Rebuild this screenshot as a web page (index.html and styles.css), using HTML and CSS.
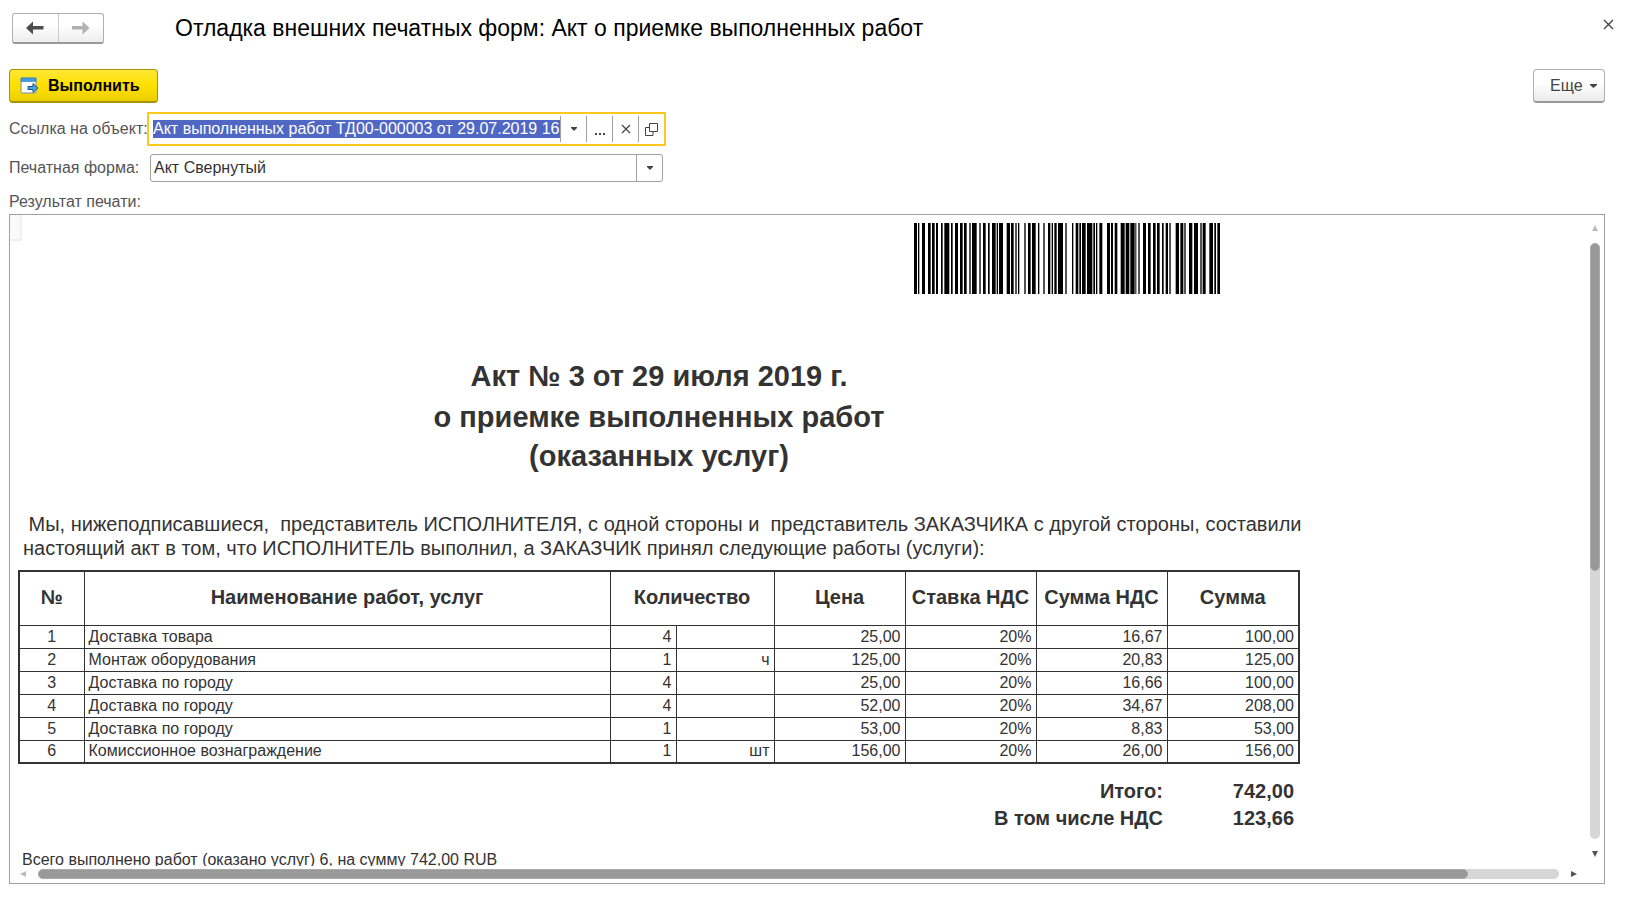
FILE: index.html
```html
<!DOCTYPE html>
<html lang="ru">
<head>
<meta charset="utf-8">
<title>Отладка внешних печатных форм</title>
<link rel="stylesheet" href="styles.css">
</head>
<body>
<header class="titlebar">
  <div class="nav">
    <button class="nav-btn" type="button" aria-label="Назад"><svg width="18" height="14" viewBox="0 0 18 14"><path d="M0 7 7 .5V5H17.500V8.500H7V13.500z" fill="#4d4d4d"/></svg></button>
    <button class="nav-btn" type="button" aria-label="Вперед"><svg width="18" height="14" viewBox="0 0 18 14"><path d="M17.500 7 10.500 .5V5H0V8.500H10.500V13.500z" fill="#b0b0b0"/></svg></button>
  </div>
  <h1 class="title">Отладка внешних печатных форм: Акт о приемке выполненных работ</h1>
  <button class="close" type="button" aria-label="Закрыть"><svg width="11" height="11" viewBox="0 0 11 11"><path d="M1 1 10 10M10 1 1 10" stroke="#444" stroke-width="1.400"/></svg></button>
</header>

<div class="toolbar">
  <button class="run" type="button">
    <svg width="20" height="18" viewBox="0 0 20 18"><rect x="1" y="1" width="15" height="15" rx="1" fill="#fff" stroke="#7b8ea5"/><path d="M1 1h15v3.500H1z" fill="#3f9be0" stroke="#2f7cc0" stroke-width=".6"/><path d="M8 9.500h5V6.500l5 4.500-5 4.500v-3H8z" fill="#4aa9e0" stroke="#1c5581"/></svg>
    Выполнить
  </button>
  <button class="more" type="button">Еще <svg width="7" height="4" viewBox="0 0 7 4"><path d="M0 0h7v1L3.500 4 0 1z" fill="#444"/></svg></button>
</div>

<div class="form">
  <label class="label" for="object">Ссылка на объект:</label>
  <div class="field focused">
    <input class="object" id="object" type="text" value="Акт выполненных работ ТД00-000003 от 29.07.2019 16">
    <button class="tool" type="button" aria-label="Список"><svg width="6" height="4" viewBox="0 0 6 4"><path d="M0 0h6v1L3 4 0 1z" fill="#444"/></svg></button>
    <button class="tool" type="button" aria-label="Выбрать"><svg width="12" height="14" viewBox="0 0 12 14"><path d="M1 11h2v2H1zM5 11h2v2H5zM9 11h2v2H9z" fill="#444"/></svg></button>
    <button class="tool" type="button" aria-label="Очистить"><svg width="10" height="10" viewBox="0 0 10 10"><path d="M1 1 9 9M9 1 1 9" stroke="#444" stroke-width="1.200"/></svg></button>
    <button class="tool" type="button" aria-label="Открыть"><svg width="13" height="13" viewBox="0 0 13 13"><path d="M4.500 .5h8v8h-8zM4.500 4.500h-4v8h7.500v-4" fill="none" stroke="#444"/></svg></button>
  </div>
  <label class="label" for="layout">Печатная форма:</label>
  <div class="field">
    <select class="layout" id="layout"><option>Акт Свернутый</option></select>
    <span class="tool drop"><svg width="6" height="4" viewBox="0 0 6 4"><path d="M0 0h6v1L3 4 0 1z" fill="#444"/></svg></span>
  </div>
</div>

<h2 class="caption">Результат печати:</h2>
<main class="panel">
  <div class="viewport">
    <span class="corner"></span>
    <article class="sheet">
      <svg class="barcode" width="306" height="71" viewBox="0 0 918 213" preserveAspectRatio="none" role="img" aria-label="Штрихкод"><path d="M0 0h9v213h-9zM12 0h4v213h-4zM24 0h9v213h-9zM42 0h8v213h-8zM54 0h8v213h-8zM66 0h6v213h-6zM81 0h5v213h-5zM91 0h15v213h-15zM111 0h5v213h-5zM123 0h9v213h-9zM138 0h8v213h-8zM150 0h8v213h-8zM166 0h4v213h-4zM174 0h14v213h-14zM196 0h4v213h-4zM207 0h8v213h-8zM222 0h5v213h-5zM234 0h11v213h-11zM248 0h4v213h-4zM255 0h12v213h-12zM278 0h10v213h-10zM291 0h8v213h-8zM304 0h4v213h-4zM312 0h4v213h-4zM331 0h4v213h-4zM342 0h8v213h-8zM354 0h11v213h-11zM372 0h4v213h-4zM388 0h4v213h-4zM402 0h7v213h-7zM413 0h4v213h-4zM421 0h7v213h-7zM432 0h15v213h-15zM454 0h4v213h-4zM474 0h4v213h-4zM485 0h8v213h-8zM496 0h5v213h-5zM504 0h11v213h-11zM519 0h16v213h-16zM538 0h5v213h-5zM546 0h4v213h-4zM556 0h9v213h-9zM579 0h9v213h-9zM591 0h6v213h-6zM602 0h8v213h-8zM620 0h12v213h-12zM635 0h11v213h-11zM649 0h13v213h-13zM664 0h3v213h-3zM673 0h4v213h-4zM687 0h9v213h-9zM702 0h8v213h-8zM717 0h8v213h-8zM729 0h8v213h-8zM744 0h5v213h-5zM755 0h7v213h-7zM766 0h4v213h-4zM785 0h10v213h-10zM799 0h9v213h-9zM811 0h4v213h-4zM825 0h10v213h-10zM840 0h12v213h-12zM859 0h4v213h-4zM866 0h9v213h-9zM886 0h11v213h-11zM901 0h5v213h-5zM910 0h8v213h-8z"/></svg>
      <div class="heading">
        <p class="number">Акт № 3 от 29 июля 2019 г.</p>
        <p class="subject">о приемке выполненных работ<br>(оказанных услуг)</p>
      </div>
      <p class="intro"> Мы, нижеподписавшиеся,  представитель ИСПОЛНИТЕЛЯ, с одной стороны и  представитель ЗАКАЗЧИКА с другой стороны, составили
настоящий акт в том, что ИСПОЛНИТЕЛЬ выполнил, а ЗАКАЗЧИК принял следующие работы (услуги):</p>
      <table class="works">
        <colgroup><col class="c-num"><col class="c-name"><col class="c-qty"><col class="c-unit"><col class="c-sum"><col class="c-sum"><col class="c-sum"><col class="c-total"></colgroup>
        <thead>
          <tr><th>№</th><th>Наименование работ, услуг</th><th colspan="2">Количество</th><th>Цена</th><th>Ставка НДС</th><th>Сумма НДС</th><th>Сумма</th></tr>
        </thead>
        <tbody>
          <tr><td>1</td><td>Доставка товара</td><td>4</td><td></td><td>25,00</td><td>20%</td><td>16,67</td><td>100,00</td></tr>
          <tr><td>2</td><td>Монтаж оборудования</td><td>1</td><td>ч</td><td>125,00</td><td>20%</td><td>20,83</td><td>125,00</td></tr>
          <tr><td>3</td><td>Доставка по городу</td><td>4</td><td></td><td>25,00</td><td>20%</td><td>16,66</td><td>100,00</td></tr>
          <tr><td>4</td><td>Доставка по городу</td><td>4</td><td></td><td>52,00</td><td>20%</td><td>34,67</td><td>208,00</td></tr>
          <tr><td>5</td><td>Доставка по городу</td><td>1</td><td></td><td>53,00</td><td>20%</td><td>8,83</td><td>53,00</td></tr>
          <tr><td>6</td><td>Комиссионное вознаграждение</td><td>1</td><td>шт</td><td>156,00</td><td>20%</td><td>26,00</td><td>156,00</td></tr>
        </tbody>
      </table>
      <dl class="totals">
        <dt>Итого:</dt><dd>742,00</dd>
        <dt>В том числе НДС</dt><dd>123,66</dd>
      </dl>
      <p class="summary">Всего выполнено работ (оказано услуг) 6, на сумму 742,00 RUB</p>
    </article>
  </div>
  <div class="scroll vertical">
    <svg width="6" height="6" viewBox="0 0 6 6"><path d="M3 0 6 6H0z" fill="#bbb"/></svg>
    <div class="track"><div class="thumb"></div></div>
    <svg width="6" height="6" viewBox="0 0 6 6"><path d="M0 0h6L3 6z" fill="#555"/></svg>
  </div>
  <div class="scroll horizontal">
    <svg width="6" height="6" viewBox="0 0 6 6"><path d="M6 0v6L0 3z" fill="#bbb"/></svg>
    <div class="track"><div class="thumb"></div></div>
    <svg width="6" height="6" viewBox="0 0 6 6"><path d="M0 0 6 3 0 6z" fill="#555"/></svg>
  </div>
</main>
</body>
</html>
```

FILE: styles.css
```css
* { box-sizing: border-box; }

body {
  display: flex;
  flex-direction: column;
  height: 100vh;
  margin: 0;
  padding: 13px 22px 13px 9px;
  overflow: hidden;
  background: #fff;
  color: #333;
  font: 16px/18px "Liberation Sans", Arial, sans-serif;
}

h1, h2, p, dl, dd { margin: 0; font-weight: normal; }

button, input, select {
  margin: 0;
  padding: 0;
  border: 0;
  background: none;
  color: inherit;
  font: inherit;
}

svg { display: block; flex: none; }

.titlebar {
  display: flex;
  align-items: center;
  margin: 0 -9px 0 3px;
}

.nav {
  display: flex;
  width: 92px;
  height: 31px;
  border: 1px solid #b0b0b0;
  border-bottom: 2px solid #999;
  border-radius: 3px;
  background: linear-gradient(#fff 40%, #ededed);
}

.nav-btn {
  display: flex;
  flex: 1;
  align-items: center;
  justify-content: center;
}

.nav-btn + .nav-btn { border-left: 1px solid #ccc; }

.title {
  flex: 1;
  margin-left: 71px;
  padding-bottom: 2px;
  color: #000;
  font-size: 23px;
  line-height: 28px;
}

.close { padding: 0 0 8px; }

.toolbar {
  display: flex;
  justify-content: space-between;
  margin-top: 25px;
}

.run, .more {
  display: flex;
  align-items: center;
  height: 34px;
  border: 1px solid #b0b0b0;
  border-bottom: 2px solid #999;
  border-radius: 4px;
  background: linear-gradient(#fff 40%, #ebebeb);
}

.run {
  gap: 8px;
  width: 149px;
  padding-left: 10px;
  border-color: #a89400;
  background: linear-gradient(#ffe838, #ffe000 50%, #ecce00);
  color: #000;
  font-size: 16px;
  font-weight: bold;
}

.more {
  gap: 7px;
  width: 72px;
  padding-left: 16px;
  color: #444;
}

.form {
  display: grid;
  grid-template-columns: 138px 519px;
  align-items: center;
  row-gap: 8px;
  margin-top: 9px;
}

.label, .caption {
  color: #555;
  font-size: 16px;
  white-space: nowrap;
}

.field {
  display: flex;
  height: 28px;
  margin: 0 3px;
  border: 1px solid #a0a0a0;
  border-radius: 3px;
}

.focused {
  height: 34px;
  margin: 0;
  padding: 2px 0 2px 4px;
  border: 2px solid #fcc81e;
  border-radius: 0;
}

.object {
  flex: 1;
  align-self: center;
  min-width: 0;
  height: 18px;
  background: #5068c4;
  color: #fff;
}

.layout {
  flex: 1;
  padding-left: 3px;
  appearance: none;
}

.tool {
  display: flex;
  align-items: center;
  justify-content: center;
  width: 26px;
  border-left: 1px solid #a0a0a0;
}

.drop { pointer-events: none; }

.caption { margin: 11px 0 3px; }

.panel {
  display: grid;
  flex: 1;
  grid-template: minmax(0, 1fr) 17px / minmax(0, 1fr) 18px;
  min-height: 0;
  border: 1px solid #a0a0a0;
}

.viewport {
  position: relative;
  overflow: hidden;
}

.corner {
  position: absolute;
  top: 0;
  left: 0;
  width: 12px;
  height: 26px;
  border: solid #f0f0f0;
  border-width: 0 2px 2px 0;
  background: #fafafa;
}

.sheet {
  width: 1282px;
  margin: 8px 0 0 8px;
}

.barcode { margin-left: 896px; }

.heading {
  padding-top: 60px;
  font-size: 29px;
  text-align: center;
}

.number, .subject { font-weight: bold; }
.number { line-height: 44px; }
.subject { line-height: 39px; }

.intro {
  margin-top: 36px;
  padding-left: 5px;
  font-size: 20px;
  line-height: 24px;
  white-space: pre;
}

.works {
  width: 100%;
  margin-top: 10px;
  border: 2px solid #333;
  border-collapse: collapse;
  table-layout: fixed;
}

.c-num { width: 65px; }
.c-qty { width: 66px; }
.c-unit { width: 98px; }
.c-sum { width: 131px; }
.c-total { width: 132px; }

.works th, .works td {
  padding: 0 4px;
  border: 1px solid #333;
}

.works th {
  height: 54px;
  padding: 0 0 2px;
  font-size: 20px;
}

.works td {
  height: 23px;
  font-size: 16px;
  text-align: right;
}

.works td:nth-child(1) { text-align: center; }
.works td:nth-child(2) { text-align: left; }

.totals {
  display: grid;
  grid-template-columns: 1fr 131px;
  margin-top: 14px;
  padding-right: 6px;
  font-size: 20px;
  font-weight: bold;
  line-height: 27px;
  text-align: right;
}

.totals dd { font-weight: bold; }

.summary {
  margin-top: 19px;
  padding-left: 4px;
  font-size: 16px;
  white-space: nowrap;
}

.scroll {
  display: flex;
  align-items: center;
}

.track {
  display: flex;
  flex: 1;
  border-radius: 5px;
  background: #d6d6d6;
}

.thumb {
  border: 1px solid #aaa;
  border-radius: 5px;
  background: #999;
}

.vertical {
  flex-direction: column;
  gap: 12px;
  padding: 10px 0 9px;
}

.vertical .track { width: 10px; }
.vertical .thumb { width: 10px; height: 55%; }

.horizontal {
  gap: 12px;
  padding: 0 9px 2px 10px;
}

.horizontal .track { height: 10px; }
.horizontal .thumb { width: 94%; height: 10px; }
```
